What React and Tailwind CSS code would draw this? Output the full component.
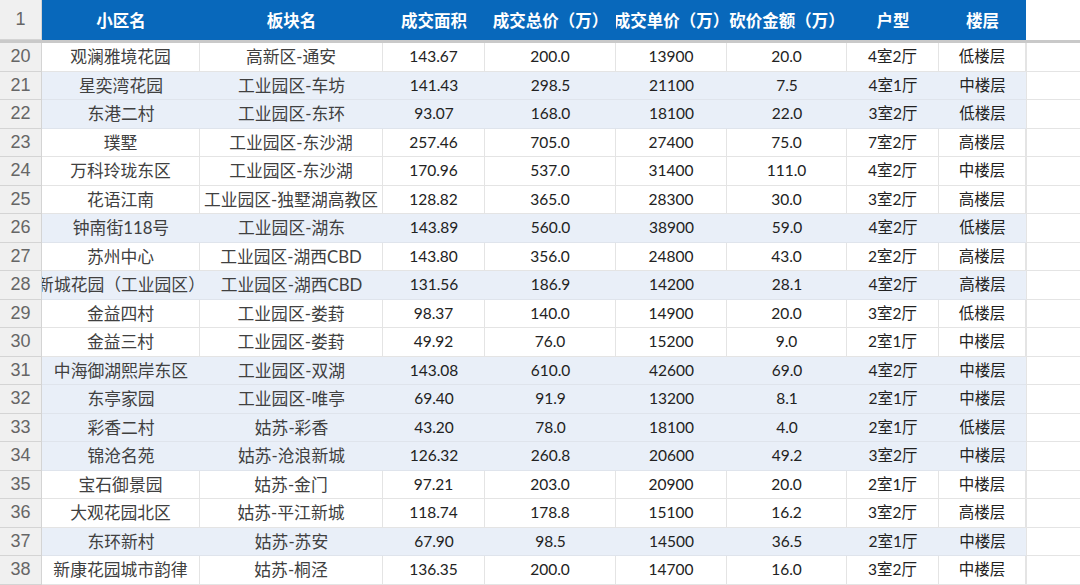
const cols = "grid grid-cols-[42px_158px_183px_102px_131px_111px_120px_92px_87px_1fr]";

const headers = ["小区名", "板块名", "成交面积", "成交总价（万）", "成交单价（万）", "砍价金额（万）", "户型", "楼层"];

const rows = [
  [20, "观澜雅境花园", "高新区-通安", "143.67", "200.0", "13900", "20.0", "4室2厅", "低楼层", false],
  [21, "星奕湾花园", "工业园区-车坊", "141.43", "298.5", "21100", "7.5", "4室1厅", "中楼层", true],
  [22, "东港二村", "工业园区-东环", "93.07", "168.0", "18100", "22.0", "3室2厅", "低楼层", true],
  [23, "璞墅", "工业园区-东沙湖", "257.46", "705.0", "27400", "75.0", "7室2厅", "高楼层", false],
  [24, "万科玲珑东区", "工业园区-东沙湖", "170.96", "537.0", "31400", "111.0", "4室2厅", "中楼层", false],
  [25, "花语江南", "工业园区-独墅湖高教区", "128.82", "365.0", "28300", "30.0", "3室2厅", "高楼层", false],
  [26, "钟南街118号", "工业园区-湖东", "143.89", "560.0", "38900", "59.0", "4室2厅", "低楼层", true],
  [27, "苏州中心", "工业园区-湖西CBD", "143.80", "356.0", "24800", "43.0", "2室2厅", "高楼层", false],
  [28, "新城花园（工业园区）", "工业园区-湖西CBD", "131.56", "186.9", "14200", "28.1", "4室2厅", "高楼层", true],
  [29, "金益四村", "工业园区-娄葑", "98.37", "140.0", "14900", "20.0", "3室2厅", "低楼层", false],
  [30, "金益三村", "工业园区-娄葑", "49.92", "76.0", "15200", "9.0", "2室1厅", "中楼层", false],
  [31, "中海御湖熙岸东区", "工业园区-双湖", "143.08", "610.0", "42600", "69.0", "4室2厅", "中楼层", true],
  [32, "东亭家园", "工业园区-唯亭", "69.40", "91.9", "13200", "8.1", "2室1厅", "中楼层", true],
  [33, "彩香二村", "姑苏-彩香", "43.20", "78.0", "18100", "4.0", "2室1厅", "低楼层", true],
  [34, "锦沧名苑", "姑苏-沧浪新城", "126.32", "260.8", "20600", "49.2", "3室2厅", "中楼层", true],
  [35, "宝石御景园", "姑苏-金门", "97.21", "203.0", "20900", "20.0", "2室1厅", "中楼层", false],
  [36, "大观花园北区", "姑苏-平江新城", "118.74", "178.8", "15100", "16.2", "3室2厅", "高楼层", false],
  [37, "东环新村", "姑苏-苏安", "67.90", "98.5", "14500", "36.5", "2室1厅", "中楼层", true],
  [38, "新康花园城市韵律", "姑苏-桐泾", "136.35", "200.0", "14700", "16.0", "3室2厅", "中楼层", false],
];

const RowNum = ({ n }) => (
  <div className="flex items-center justify-center bg-[#f0f0f0] border-r border-b border-[#d4d4d4] text-[18px] text-[#666666] font-['Liberation_Sans',sans-serif]">
    {n}
  </div>
);

const Row = ({ r }) => {
  const [n, ...rest] = r;
  const band = rest[8];
  const cells = rest.slice(0, 8);
  return (
    <div className={`${cols} h-[28.5px]`}>
      <RowNum n={n} />
      {cells.map((c, i) => (
        <div
          key={i}
          className={`flex items-center justify-center overflow-hidden whitespace-nowrap border-b ${
            band ? "bg-[#e9eff8] border-[#dfe4ec]" : "bg-white border-r border-[#e4e4e4]"
          } ${i < 2 ? "text-[16.8px] text-[#404040]" : "text-[15.5px] text-[#222222]"}`}
        >
          {c}
        </div>
      ))}
      <div className="bg-white border-b border-l border-[#e4e4e4]" />
    </div>
  );
};

export default function App() {
  return (
    <div className="w-[1080px] h-[585px] overflow-hidden bg-white font-['Lato','Noto_Sans_CJK_SC',sans-serif]">
      {/* header row */}
      <div className={`${cols} h-[40px]`}>
        <RowNum n={1} />
        {headers.map((h) => (
          <div
            key={h}
            className="flex items-center justify-center overflow-hidden whitespace-nowrap bg-[#0868bb] text-white font-bold text-[16.5px] font-['Noto_Sans_CJK_SC',sans-serif]"
          >
            {h}
          </div>
        ))}
        <div className="bg-white" />
      </div>
      {/* frozen pane line */}
      <div className="h-[3px] bg-[#c9c9c9]" />
      <div className="-mt-[3px] pt-[3px]">
        {rows.map((r) => (
          <Row key={r[0]} r={r} />
        ))}
      </div>
    </div>
  );
}
